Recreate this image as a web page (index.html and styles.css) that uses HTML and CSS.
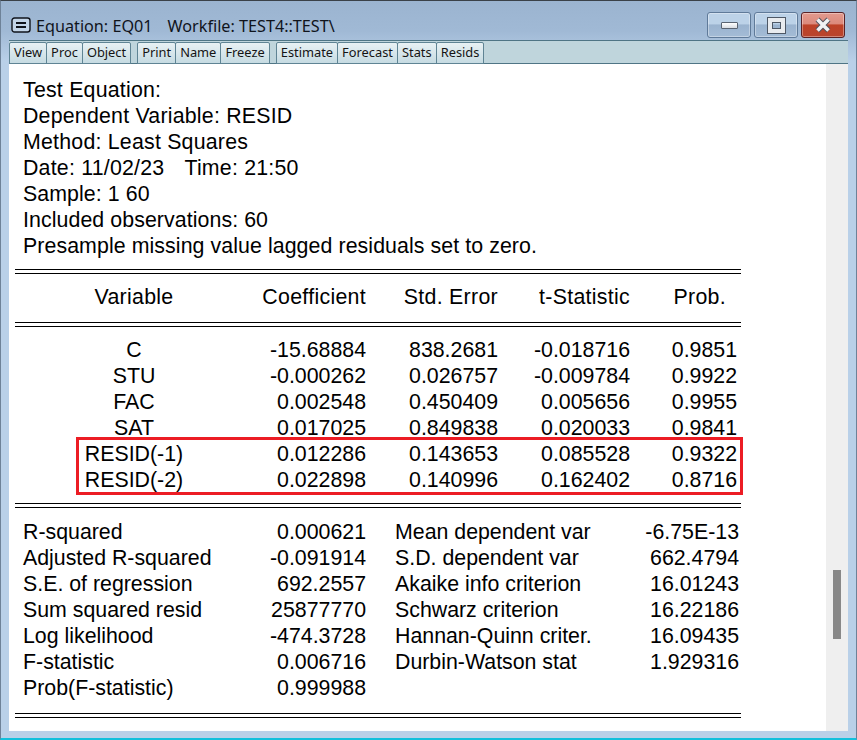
FILE: index.html
```html
<!DOCTYPE html>
<html lang="en">
<head>
<meta charset="utf-8">
<title>Equation: EQ01</title>
<link rel="stylesheet" href="styles.css">
</head>
<body>
<div class="window">
  <header class="titlebar">
    <svg class="sysicon" width="20" height="16" viewBox="0 0 20 16"><rect x="1" y="1" width="18" height="14" rx="2.5" fill="#c3d5e8" stroke="#10141c" stroke-width="1.4"/><path d="M5 6h10M5 10h10" stroke="#10141c" stroke-width="2"/></svg>
    <span class="title">Equation: EQ01</span>
    <span class="title workfile">Workfile: TEST4::TEST\</span>
    <div class="controls">
      <div class="ctl ctl-min"><span class="min-glyph"></span></div>
      <div class="ctl ctl-max"><span class="max-glyph"></span></div>
      <div class="ctl ctl-close">
        <svg width="20" height="16" viewBox="0 0 20 16"><path d="M4.500 2.500L15.500 13.500M15.500 2.500L4.500 13.500" fill="none" stroke="#50505a" stroke-width="5.500"/><path d="M4.500 2.500L15.500 13.500M15.500 2.500L4.500 13.500" fill="none" stroke="#f1f1f3" stroke-width="3.600"/></svg>
      </div>
    </div>
  </header>
  <nav class="toolbar">
    <div class="group">
      <button class="btn">View</button><button class="btn">Proc</button><button class="btn">Object</button>
    </div>
    <div class="group">
      <button class="btn">Print</button><button class="btn">Name</button><button class="btn">Freeze</button>
    </div>
    <div class="group">
      <button class="btn">Estimate</button><button class="btn">Forecast</button><button class="btn">Stats</button><button class="btn">Resids</button>
    </div>
  </nav>
  <div class="body">
    <main class="report">
      <div class="meta">
        <div class="wide">Test Equation:</div>
        <div class="wide">Dependent Variable: RESID</div>
        <div class="wide">Method: Least Squares</div>
        <div class="wide">Date: 11/02/23<span class="time">Time: 21:50</span></div>
        <div class="slight">Sample: 1 60</div>
        <div class="slight">Included observations: 60</div>
        <div class="slight">Presample missing value lagged residuals set to zero.</div>
      </div>
      <hr class="rule rule-a">
      <div class="row head"><span class="var">Variable</span><span>Coefficient</span><span>Std. Error</span><span>t-Statistic</span><span class="prob-head">Prob.</span></div>
      <hr class="rule rule-b">
      <div class="rows">
        <div class="row"><span class="var">C</span><span>-15.68884</span><span>838.2681</span><span>-0.018716</span><span>0.9851</span></div>
        <div class="row"><span class="var">STU</span><span>-0.000262</span><span>0.026757</span><span>-0.009784</span><span>0.9922</span></div>
        <div class="row"><span class="var">FAC</span><span>0.002548</span><span>0.450409</span><span>0.005656</span><span>0.9955</span></div>
        <div class="row"><span class="var">SAT</span><span>0.017025</span><span>0.849838</span><span>0.020033</span><span>0.9841</span></div>
        <div class="highlight">
          <div class="row"><span class="var">RESID(-1)</span><span>0.012286</span><span>0.143653</span><span>0.085528</span><span>0.9322</span></div>
          <div class="row"><span class="var">RESID(-2)</span><span>0.022898</span><span>0.140996</span><span>0.162402</span><span>0.8716</span></div>
        </div>
      </div>
      <hr class="rule rule-c">
      <div class="stats">
        <span>R-squared</span><span class="num">0.000621</span><span class="lab2">Mean dependent var</span><span class="num">-6.75E-13</span>
        <span>Adjusted R-squared</span><span class="num">-0.091914</span><span class="lab2">S.D. dependent var</span><span class="num">662.4794</span>
        <span>S.E. of regression</span><span class="num">692.2557</span><span class="lab2">Akaike info criterion</span><span class="num">16.01243</span>
        <span>Sum squared resid</span><span class="num">25877770</span><span class="lab2">Schwarz criterion</span><span class="num">16.22186</span>
        <span>Log likelihood</span><span class="num">-474.3728</span><span class="lab2">Hannan-Quinn criter.</span><span class="num">16.09435</span>
        <span>F-statistic</span><span class="num">0.006716</span><span class="lab2">Durbin-Watson stat</span><span class="num">1.929316</span>
        <span>Prob(F-statistic)</span><span class="num">0.999988</span><span></span><span></span>
      </div>
      <hr class="rule rule-d">
    </main>
    <aside class="scrollbar"><div class="thumb"></div></aside>
  </div>
</div>
</body>
</html>
```
FILE: styles.css
```css
* { box-sizing: border-box; }
html, body { margin: 0; height: 100%; }
body { background: #fff; overflow: hidden; }

.window {
  width: 857px;
  height: 740px;
  display: flex;
  flex-direction: column;
  padding: 0 8px 7px;
  border-top: 1px solid #3a4148;
  border-bottom: 2px solid #12c0dc;
  border-left: 1px solid #6e8298;
  border-right: 1px solid #6e8298;
  background: linear-gradient(#9bb4d0 0, #a0b9d5 30px, #b9d0e8 60px);
  font-family: "Liberation Sans", Arial, sans-serif;
}

.titlebar {
  height: 39px;
  flex: none;
  display: flex;
  align-items: flex-start;
  padding: 15px 0 0 2px;
  font-family: "Noto Sans", "Open Sans", sans-serif;
  font-size: 16.2px;
  line-height: 20px;
  color: #10141c;
}
.sysicon { flex: none; margin-top: 1px; margin-right: 5px; }
.workfile { margin-left: 15px; }

.controls {
  margin-left: auto;
  margin-top: -4px;
  margin-right: 3px;
  display: flex;
  gap: 3px;
}
.ctl {
  width: 44px;
  height: 26px;
  border: 1px solid #5f7a99;
  border-radius: 3px;
  display: flex;
  align-items: center;
  justify-content: center;
  box-shadow: inset 0 0 0 1px rgba(255, 255, 255, .35);
  background: linear-gradient(#bcd2e8 0, #bcd2e8 45%, #9ab3cf 50%, #a4bcd6 100%);
}
.ctl-close {
  border-color: #5a2226;
  background: linear-gradient(#e29a8e 0, #dc8a7c 45%, #bd4228 50%, #b9442e 100%);
}
.min-glyph {
  width: 17px;
  height: 7px;
  background: linear-gradient(#fff, #d8dce2);
  border: 1px solid #5a6472;
  border-radius: 1px;
}
.max-glyph {
  width: 17px;
  height: 15px;
  border: 4px solid #e8ebef;
  outline: 1px solid #4e5866;
  box-shadow: inset 0 0 0 1px #4e5866;
}

.toolbar {
  height: 24px;
  flex: none;
  display: flex;
  gap: 7px;
  padding-left: 1px;
  padding-top: 1px;
  background: #bfd5dc;
  border-top: 1px solid #4f7585;
  border-bottom: 1px solid #4f7585;
}
.group { display: flex; }
.btn {
  height: 22px;
  margin: 0 0 0 -1px;
  padding: 0 4px 2px;
  font-family: "Noto Sans", "Open Sans", sans-serif;
  font-size: 12.85px;
  line-height: 18px;
  color: #141414;
  border: 1px solid #5f8494;
  border-radius: 2px 2px 0 0;
  background: linear-gradient(#e8f1f4, #c6dbe2);
}

.body {
  flex: 1;
  min-height: 0;
  display: flex;
  background: #fff;
}
.report {
  flex: 1;
  padding: 13px 0 0 6px;
  color: #000;
  font-size: 21.33px;
  line-height: 26px;
}
.meta { padding-left: 8px; }
.wide { letter-spacing: .22px; }
.slight { letter-spacing: .08px; }
.time { margin-left: 20px; }

.rule {
  width: 726px;
  height: 5px;
  margin: 0;
  border: 0;
  border-top: 1px solid #000;
  border-bottom: 1px solid #000;
}
.rule-a { margin-top: 10px; margin-bottom: 10px; }
.rule-b { margin-top: 12px; margin-bottom: 10px; }
.rule-c { margin-top: 10px; margin-bottom: 11px; }
.rule-d { margin-top: 12px; }

.row {
  display: grid;
  grid-template-columns: 222px 121px 132px 132px 107px;
  padding-left: 8px;
  text-align: right;
}
.head { letter-spacing: .3px; }
.var { text-align: center; }
.prob-head { padding-right: 11px; }

.highlight { position: relative; }
.highlight::after {
  content: "";
  position: absolute;
  left: 61px;
  right: 83px;
  top: -4px;
  bottom: -2px;
  border: 3px solid #ec1c24;
}

.stats {
  display: grid;
  grid-template-columns: 200px 143px 229px 144px;
  padding-left: 8px;
}
.num { text-align: right; }
.lab2 { padding-left: 29px; }

.scrollbar {
  flex: none;
  width: 22px;
  background: #efefef;
  padding: 506px 7px 0;
}
.thumb { height: 69px; background: #888; }
```
